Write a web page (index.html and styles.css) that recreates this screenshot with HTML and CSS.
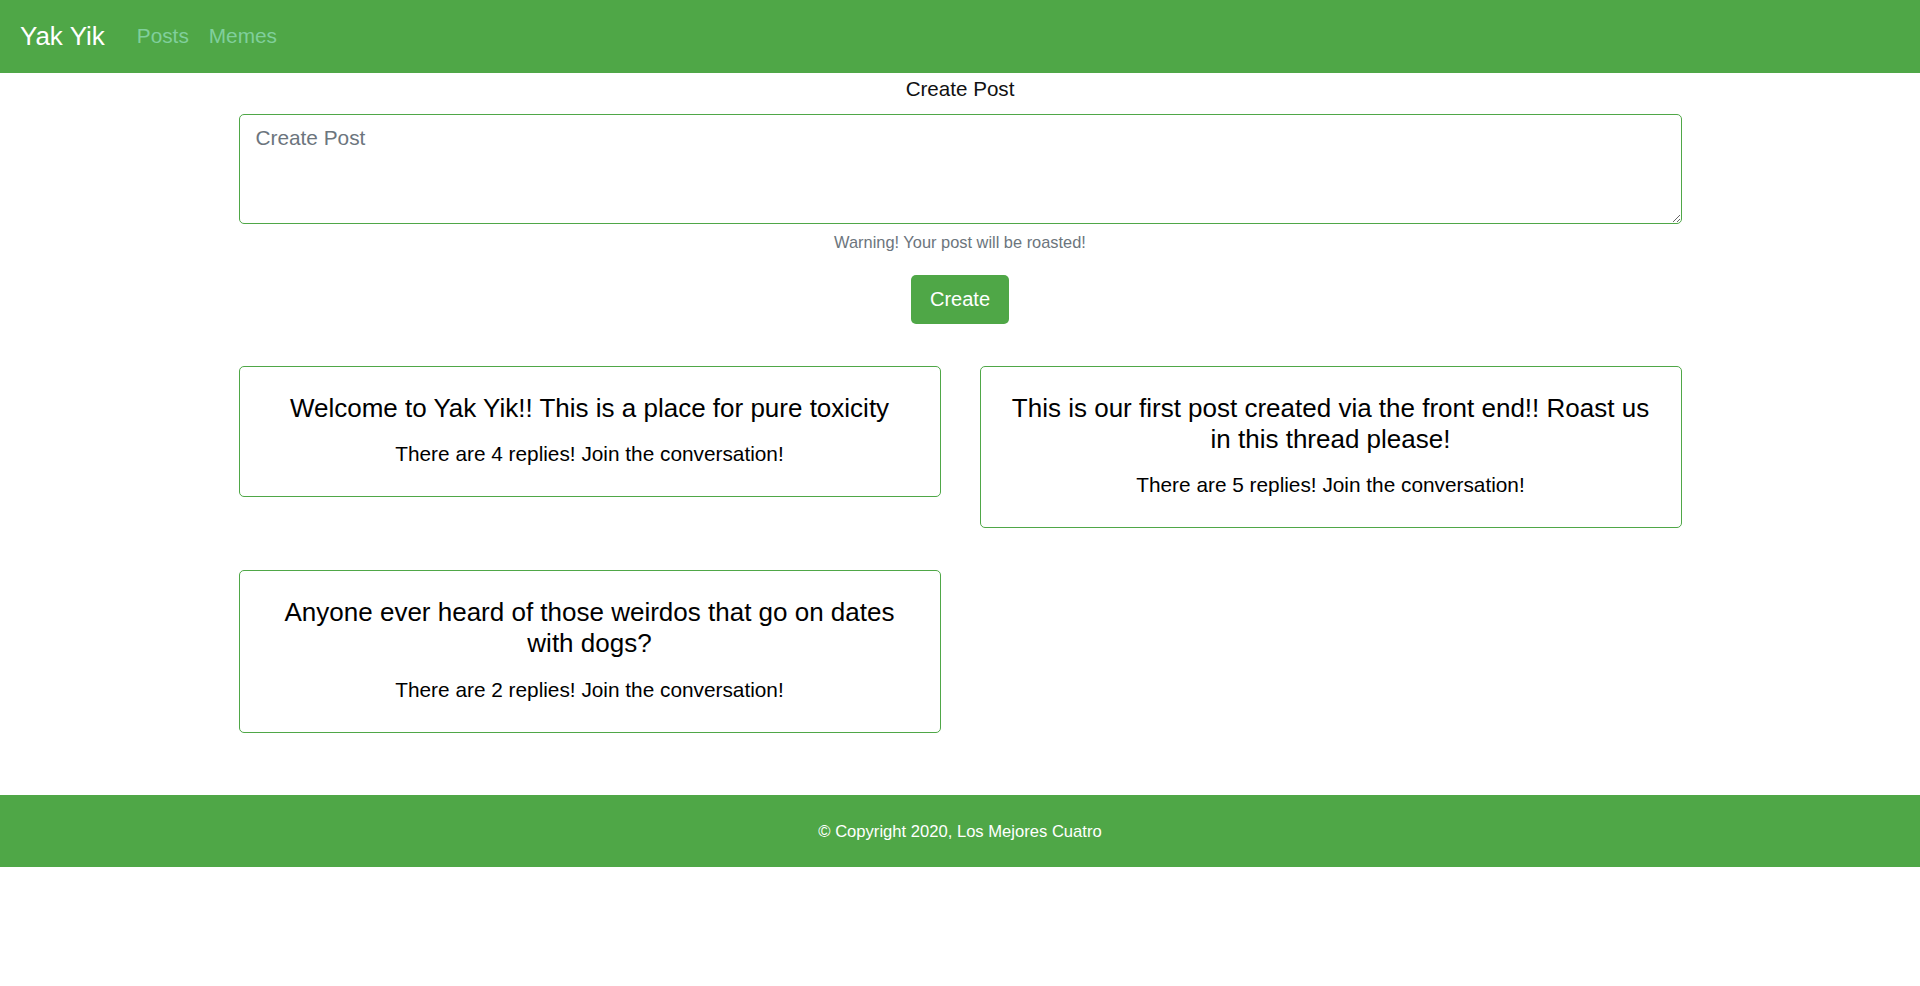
FILE: index.html
```html
<!DOCTYPE html>
<html lang="en">
<head>
<meta charset="utf-8">
<title>Yak Yik</title>
<link rel="stylesheet" href="styles.css">
</head>
<body>
<nav class="navbar">
  <a class="brand" href="#">Yak Yik</a>
  <a class="nav-link" href="#">Posts</a>
  <a class="nav-link" href="#">Memes</a>
</nav>
<main class="content">
  <form class="create-form">
    <label class="form-title" for="post">Create Post</label>
    <textarea id="post" class="post-input" placeholder="Create Post"></textarea>
    <small class="warning">Warning! Your post will be roasted!</small>
    <div class="actions"><button type="button" class="btn">Create</button></div>
  </form>
  <section class="cards">
    <div class="card">
      <h5 class="card-title">Welcome to Yak Yik!! This is a place for pure toxicity</h5>
      <p class="card-text">There are 4 replies! Join the conversation!</p>
    </div>
    <div class="card">
      <h5 class="card-title">This is our first post created via the front end!! Roast us in this thread please!</h5>
      <p class="card-text">There are 5 replies! Join the conversation!</p>
    </div>
    <div class="card">
      <h5 class="card-title">Anyone ever heard of those weirdos that go on dates with dogs?</h5>
      <p class="card-text">There are 2 replies! Join the conversation!</p>
    </div>
  </section>
</main>
<footer class="footer">© Copyright 2020, Los Mejores Cuatro</footer>
</body>
</html>
```
FILE: styles.css
```css
* { box-sizing: border-box; }
html, body { margin: 0; padding: 0; }
body {
  font-family: "Liberation Sans", Arial, sans-serif;
  color: #212529;
  background: #fff;
  font-size: 20px;
}
.navbar {
  height: 73px;
  background: #4fa747;
  display: flex;
  align-items: center;
  padding: 0 20px;
}
.brand {
  color: #fff;
  font-size: 26px;
  text-decoration: none;
  margin-right: 22px;
}
.nav-link {
  color: #80cf9c;
  font-size: 20.8px;
  text-decoration: none;
  padding: 0 10px;
  margin-top: -1px;
}
.content {
  width: 1443px;
  margin: 0 auto;
}
.create-form {
  display: flex;
  flex-direction: column;
}
.form-title {
  text-align: center;
  font-size: 20.6px;
  line-height: 31px;
  color: #111;
}
.post-input {
  display: block;
  width: 100%;
  height: 110px;
  margin-top: 10px;
  border: 1px solid #4fa747;
  border-radius: 5px;
  padding: 7px 16px;
  font-family: "Liberation Sans", Arial, sans-serif;
  font-size: 20.8px;
  line-height: 1.5;
  color: #495057;
  outline: none;
}
.post-input::placeholder { color: #6c757d; opacity: 1; }
.warning {
  display: block;
  text-align: center;
  margin-top: 6px;
  font-size: 16.4px;
  line-height: 24.6px;
  color: #6c757d;
}
.actions {
  text-align: center;
  margin-top: 20px;
}
.btn {
  height: 49px;
  padding: 0 18.5px;
  font-family: "Liberation Sans", Arial, sans-serif;
  font-size: 20px;
  color: #fff;
  background: #4fa747;
  border: none;
  border-radius: 5px;
}
.cards {
  margin-top: 42px;
  display: grid;
  grid-template-columns: 702px 702px;
  column-gap: 39px;
  row-gap: 42px;
  align-items: start;
}
.card {
  border: 1px solid #4fa747;
  border-radius: 5px;
  padding: 26px 26px 27px;
  text-align: center;
  color: #000;
}
.card-title {
  margin: 0 0 14px;
  font-size: 26px;
  font-weight: 400;
  line-height: 1.2;
}
.card-text {
  margin: 0;
  font-size: 20.8px;
  line-height: 1.5;
}
.footer {
  margin-top: 62px;
  height: 72px;
  padding-top: 3px;
  background: #4fa747;
  color: #fff;
  display: flex;
  align-items: center;
  justify-content: center;
  font-size: 16.6px;
}
```
